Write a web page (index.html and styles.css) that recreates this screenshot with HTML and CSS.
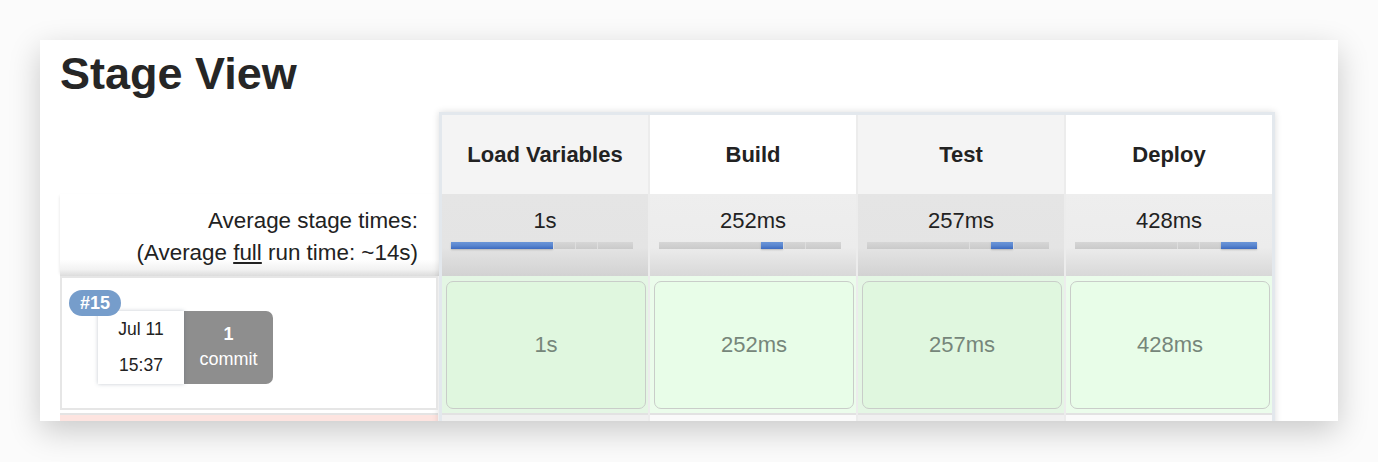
FILE: index.html
```html
<!DOCTYPE html>
<html>
<head>
<meta charset="utf-8">
<link rel="stylesheet" href="styles.css">
</head>
<body>
<div class="card">
  <h1 class="title">Stage View</h1>
  <div class="stage-view">
    <div class="runs">
      <div class="runs-head"></div>
      <div class="avg-label">
        <div>Average stage times:</div>
        <div>(Average <u>full</u> run time: ~14s)</div>
      </div>
      <div class="run-row">
        <div class="run-cell">
          <span class="badge">#15</span>
          <div class="run-meta">
            <div class="date-box">
              <div>Jul 11</div>
              <div>15:37</div>
            </div>
            <div class="commit-box">
              <div class="commit-num">1</div>
              <div>commit</div>
            </div>
          </div>
        </div>
      </div>
      <div class="run-row failed"></div>
    </div>
    <div class="stages">
      <div class="sh odd">Load Variables</div>
      <div class="sh even">Build</div>
      <div class="sh odd">Test</div>
      <div class="sh even">Deploy</div>

      <div class="avg odd">
        <div class="avg-time">1s</div>
        <div class="bar">
          <span class="seg on" style="width:102px"></span><span class="seg" style="width:22px"></span><span class="seg" style="width:22px"></span><span class="seg" style="width:36px"></span>
        </div>
      </div>
      <div class="avg even">
        <div class="avg-time">252ms</div>
        <div class="bar">
          <span class="seg" style="width:102px"></span><span class="seg on" style="width:22px"></span><span class="seg" style="width:22px"></span><span class="seg" style="width:36px"></span>
        </div>
      </div>
      <div class="avg odd">
        <div class="avg-time">257ms</div>
        <div class="bar">
          <span class="seg" style="width:102px"></span><span class="seg" style="width:22px"></span><span class="seg on" style="width:22px"></span><span class="seg" style="width:36px"></span>
        </div>
      </div>
      <div class="avg even">
        <div class="avg-time">428ms</div>
        <div class="bar">
          <span class="seg" style="width:102px"></span><span class="seg" style="width:22px"></span><span class="seg" style="width:22px"></span><span class="seg on" style="width:36px"></span>
        </div>
      </div>

      <div class="cell odd"><div class="box">1s</div></div>
      <div class="cell even"><div class="box">252ms</div></div>
      <div class="cell odd"><div class="box">257ms</div></div>
      <div class="cell even"><div class="box">428ms</div></div>

      <div class="cell2 odd"></div>
      <div class="cell2 even"></div>
      <div class="cell2 odd"></div>
      <div class="cell2 even"></div>
    </div>
  </div>
</div>
</body>
</html>
```

FILE: styles.css
```css
html, body {
  margin: 0;
  padding: 0;
}
body {
  background: #fbfbfb;
  font-family: "Liberation Sans", Arial, sans-serif;
  color: #222;
  width: 1378px;
  height: 462px;
  overflow: hidden;
}
.card {
  margin: 40px 40px 0 40px;
  width: 1298px;
  height: 381px;
  box-sizing: border-box;
  padding: 0 20px;
  background: #fff;
  overflow: hidden;
  box-shadow: 0 10px 30px rgba(0, 0, 0, 0.2);
}
.title {
  margin: 11px 0 16px 0;
  font-size: 45px;
  line-height: 45px;
  font-weight: bold;
  color: #262626;
}
.stage-view {
  display: flex;
  align-items: flex-start;
}
.runs {
  width: 379px;
  display: flex;
  flex-direction: column;
}
.runs-head {
  height: 82px;
}
.avg-label {
  height: 82px;
  box-sizing: border-box;
  padding: 11px 21px 0 0;
  text-align: right;
  font-size: 22.4px;
  line-height: 32px;
  color: #222;
  background: linear-gradient(to bottom, #fff 0, #fff 80%, #f2f2f2 92%, #dcdcdc 100%);
  box-shadow: -2px 0 3px -2px rgba(0, 0, 0, 0.12);
}
.run-row {
  height: 137px;
  box-sizing: border-box;
  padding-right: 1px;
}
.run-cell {
  position: relative;
  height: 134px;
  box-sizing: border-box;
  border: 2px solid #e6e6e6;
  background: #fff;
}
.badge {
  position: absolute;
  left: 7px;
  top: 12px;
  z-index: 2;
  width: 52px;
  height: 26px;
  border-radius: 13px;
  background: #769dcb;
  color: #fff;
  font-weight: bold;
  font-size: 18px;
  line-height: 26px;
  text-align: center;
}
.run-meta {
  display: flex;
  margin: 33px 0 0 36px;
}
.date-box {
  width: 86px;
  height: 73px;
  box-sizing: border-box;
  background: #fff;
  text-align: center;
  font-size: 17.5px;
  line-height: 36px;
  color: #222;
  box-shadow: 0 0 4px rgba(60, 80, 100, 0.3);
  position: relative;
  z-index: 1;
}
.commit-box {
  width: 89px;
  height: 73px;
  box-sizing: border-box;
  padding-bottom: 2px;
  background: #8e8e8e;
  border-radius: 0 7px 7px 0;
  color: #fff;
  text-align: center;
  font-size: 18px;
  line-height: 25px;
  display: flex;
  flex-direction: column;
  justify-content: center;
}
.commit-num {
  font-weight: bold;
}
.run-row.failed {
  padding: 0;
  height: 40px;
  border-top: 2px solid #e4e4e4;
  background: #fde4e0;
  margin-right: 1px;
}
.stages {
  width: 836px;
  box-sizing: border-box;
  border: 3px solid #e3e8ed;
  border-bottom: 0;
  display: grid;
  grid-template-columns: repeat(4, 206px);
  column-gap: 2px;
  background: #ececec;
  box-shadow: 0 0 7px rgba(0, 0, 0, 0.14);
}
.sh {
  height: 79px;
  display: flex;
  align-items: center;
  justify-content: center;
  font-size: 22px;
  font-weight: bold;
  color: #222;
}
.sh.odd { background: #f4f4f4; }
.sh.even { background: #fff; }
.avg {
  height: 82px;
  box-sizing: border-box;
  padding-top: 11px;
  text-align: center;
}
.avg.odd { background: linear-gradient(to bottom, #e5e5e5 0, #e4e4e4 65%, #d2d2d2 100%); }
.avg.even { background: linear-gradient(to bottom, #eeeeee 0, #ececec 65%, #d8d8d8 100%); }
.avg-time {
  font-size: 22px;
  line-height: 32px;
  color: #222;
}
.bar {
  display: flex;
  width: 182px;
  height: 7px;
  margin: 5px 0 0 9px;
  background: #d0d0d0;
}
.seg {
  display: block;
  height: 7px;
  box-sizing: border-box;
  border-left: 1px solid #dedede;
  background: linear-gradient(to bottom, #d6d6d6, #cacaca);
}
.seg:first-child { border-left: 0; }
.seg.on {
  border-left: 0;
  background: linear-gradient(to bottom, #6b96d8 0, #5a86cf 50%, #3d6bc0 100%);
  box-shadow: 0 1px 2px rgba(0, 0, 0, 0.2);
}
.cell {
  height: 137px;
  box-sizing: border-box;
  padding: 5px 2px 4px 4px;
}
.cell.odd { background: #e4f6e4; }
.cell.even { background: #ebfceb; }
.box {
  height: 128px;
  box-sizing: border-box;
  border: 1px solid #c9cdc9;
  border-radius: 7px;
  display: flex;
  align-items: center;
  justify-content: center;
  font-size: 22px;
  color: #76867a;
}
.cell.odd .box { background: #e0f7df; }
.cell.even .box { background: #e8fde8; }
.cell2 {
  height: 40px;
  border-top: 2px solid #e2e2e2;
}
.cell2.odd { background: #f0f0f0; }
.cell2.even { background: #fafafa; }
```
